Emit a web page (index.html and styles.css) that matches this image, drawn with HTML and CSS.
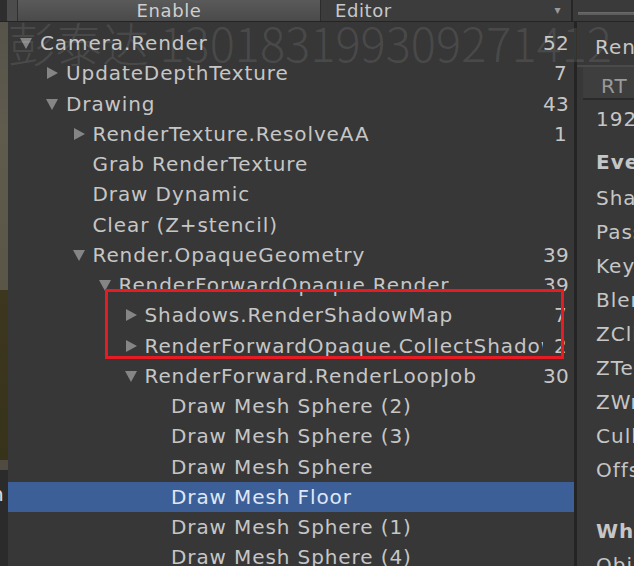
FILE: index.html
```html
<!DOCTYPE html>
<html>
<head>
<meta charset="utf-8">
<link rel="stylesheet" href="styles.css">
</head>
<body>
<div class="app">
  <div class="toolbar">
    <div class="tb-corner"></div>
    <div class="tb-stub"></div>
    <div class="tb-enable">Enable</div>
    <div class="tb-editor"><span>Editor</span><span class="caret">▾</span></div>
    <div class="tb-right"><div class="tb-slider"></div></div>
  </div>
  <div class="main">
    <div class="scene-strip">
      <div class="seg seg-tan"></div>
      <div class="seg seg-olive"></div>
      <div class="seg seg-light"></div>
      <div class="seg seg-dark"><span class="peek">n</span></div>
    </div>
    <div class="tree">
      <div class="row l0"><span class="arrow down"></span><span class="label">Camera.Render</span><span class="count">52</span></div>
      <div class="row l1"><span class="arrow right"></span><span class="label">UpdateDepthTexture</span><span class="count">7</span></div>
      <div class="row l1"><span class="arrow down"></span><span class="label">Drawing</span><span class="count">43</span></div>
      <div class="row l2"><span class="arrow right"></span><span class="label">RenderTexture.ResolveAA</span><span class="count">1</span></div>
      <div class="row l2"><span class="arrow"></span><span class="label">Grab RenderTexture</span><span class="count"></span></div>
      <div class="row l2"><span class="arrow"></span><span class="label">Draw Dynamic</span><span class="count"></span></div>
      <div class="row l2"><span class="arrow"></span><span class="label">Clear (Z+stencil)</span><span class="count"></span></div>
      <div class="row l2"><span class="arrow down"></span><span class="label">Render.OpaqueGeometry</span><span class="count">39</span></div>
      <div class="row l3"><span class="arrow down"></span><span class="label">RenderForwardOpaque.Render</span><span class="count">39</span></div>
      <div class="row l4"><span class="arrow right"></span><span class="label">Shadows.RenderShadowMap</span><span class="count">7</span></div>
      <div class="row l4"><span class="arrow right"></span><span class="label">RenderForwardOpaque.CollectShadows</span><span class="count">2</span></div>
      <div class="row l4"><span class="arrow down"></span><span class="label">RenderForward.RenderLoopJob</span><span class="count">30</span></div>
      <div class="row l5"><span class="arrow"></span><span class="label">Draw Mesh Sphere (2)</span><span class="count"></span></div>
      <div class="row l5"><span class="arrow"></span><span class="label">Draw Mesh Sphere (3)</span><span class="count"></span></div>
      <div class="row l5"><span class="arrow"></span><span class="label">Draw Mesh Sphere</span><span class="count"></span></div>
      <div class="row l5 selected"><span class="arrow"></span><span class="label">Draw Mesh Floor</span><span class="count"></span></div>
      <div class="row l5"><span class="arrow"></span><span class="label">Draw Mesh Sphere (1)</span><span class="count"></span></div>
      <div class="row l5"><span class="arrow"></span><span class="label">Draw Mesh Sphere (4)</span><span class="count"></span></div>
      <div class="highlight-box"></div>
    </div>
    <div class="divider"></div>
    <div class="inspector">
      <div class="insp-title">Render Target: _ScreenSpaceShadowmapTexture</div>
      <div class="insp-tabs"><span class="tab">RT 0</span></div>
      <div class="insp-line size">1920x1080 ARGB32</div>
      <div class="insp-line bold event">Event #22: Draw Mesh</div>
      <div class="insp-line">Shader</div>
      <div class="insp-line">Pass</div>
      <div class="insp-line">Keywords</div>
      <div class="insp-line">Blend</div>
      <div class="insp-line">ZClip</div>
      <div class="insp-line">ZTest</div>
      <div class="insp-line">ZWrite</div>
      <div class="insp-line">Cull</div>
      <div class="insp-line">Offset</div>
      <div class="insp-line bold why">Why this draw call can't be batched</div>
      <div class="insp-line">Objects have different materials</div>
    </div>
  </div>
  <div class="watermark">彭泰达 130183199309271412</div>
</div>
</body>
</html>
```

FILE: styles.css
```css
* { box-sizing: border-box; }
html, body { margin: 0; padding: 0; }
body {
  width: 634px;
  height: 566px;
  overflow: hidden;
  background: #383838;
  font-family: "DejaVu Sans", "Noto Sans CJK SC", sans-serif;
  color: #c6c6c6;
}
.app {
  position: relative;
  width: 634px;
  height: 566px;
  display: flex;
  flex-direction: column;
}
.toolbar {
  height: 22px;
  flex: none;
  display: flex;
  background: #2a2a2a;
  border-bottom: 1px solid #242424;
}
.tb-corner { width: 7px; background: #2e2e2e; }
.tb-stub { width: 11px; background: #4c4c4c; border-right: 1px solid #303030; }
.tb-enable {
  width: 303px;
  background: linear-gradient(#5a5a5a, #4a4a4a);
  border-right: 1px solid #2c2c2c;
  text-align: center;
  font-size: 18px;
  line-height: 21px;
  color: #cfcfcf;
  letter-spacing: 0.6px;
}
.tb-editor {
  width: 252px;
  background: #3c3c3c;
  border-right: 2px solid #262626;
  display: flex;
  justify-content: space-between;
  padding: 0 10px 0 14px;
  font-size: 18px;
  line-height: 21px;
  color: #c8c8c8;
  letter-spacing: 0.6px;
}
.caret { font-size: 12px; color: #9a9a9a; }
.tb-right { flex: 1; background: #3a3a3a; padding: 12px 0 0 5px; }
.tb-slider { height: 3px; background: #5e5e5e; border-top: 1px solid #6a6a6a; }

.main { flex: 1; display: flex; min-height: 0; }
.scene-strip { width: 8px; flex: none; display: flex; flex-direction: column; }
.seg-tan { height: 268px; background: linear-gradient(#56534a, #5f5b4d 40%, #5a5647); }
.seg-olive { height: 170px; background: linear-gradient(#3d371f, #37321a); }
.seg-light { height: 10px; background: #4f4b40; }
.seg-dark { flex: 1; background: #2b2b2b; position: relative; overflow: hidden; }
.peek {
  display: block;
  margin-top: 12px;
  margin-left: -9px;
  font-size: 20px;
  color: #e0e0e0;
}

.tree {
  width: 566px;
  flex: none;
  position: relative;
  padding-top: 6px;
  background: #373737;
}
.row {
  height: 30.25px;
  display: flex;
  align-items: center;
  padding-right: 7px;
  font-size: 20px;
  letter-spacing: 0.9px;
  white-space: nowrap;
}
.l0 { padding-left: 12px; }
.l1 { padding-left: 38px; }
.l2 { padding-left: 64.5px; }
.l3 { padding-left: 90.5px; }
.l4 { padding-left: 116.5px; }
.l5 { padding-left: 143px; }
.arrow { width: 20px; flex: none; height: 14px; position: relative; }
.arrow.right::before {
  content: "";
  position: absolute;
  left: 1px; top: 1px;
  border-left: 11px solid #858585;
  border-top: 6px solid transparent;
  border-bottom: 6px solid transparent;
}
.arrow.down::before {
  content: "";
  position: absolute;
  left: 0; top: 2px;
  border-top: 11px solid #858585;
  border-left: 6px solid transparent;
  border-right: 6px solid transparent;
}
.label { flex: 1; overflow: hidden; min-width: 0; }
.count { width: 24px; flex: none; text-align: right; letter-spacing: 0.3px; }
.row.selected { background: #3d5f97; color: #dfe8f7; }

.highlight-box {
  position: absolute;
  left: 97px;
  top: 267px;
  width: 459px;
  height: 70px;
  border: 3px solid #e61c25;
}

.divider { width: 3px; flex: none; background: #242424; }
.inspector {
  flex: 1;
  min-width: 0;
  overflow: hidden;
  background: #383838;
  font-size: 20px;
  letter-spacing: 1px;
  white-space: nowrap;
}
.insp-title { height: 45px; line-height: 50px; padding-left: 18px; border-bottom: 2px solid #4a4a4a; }
.insp-tabs { height: 33px; margin-left: 6px; background: #3e3e3e; border-bottom: 2px solid #2a2a2a; line-height: 38px; padding-left: 18px; color: #9a9a9a; }
.insp-line { height: 34px; line-height: 34px; padding-left: 19px; }
.insp-line.size { height: 38px; line-height: 38px; }
.insp-line.event { height: 38px; line-height: 38px; margin-top: 5px; }
.insp-line.why { margin-top: 27px; }
.insp-line.bold { font-weight: bold; }

.watermark {
  position: absolute;
  left: 8px;
  top: 14px;
  font-family: "Noto Sans CJK SC", sans-serif;
  font-weight: 300;
  font-size: 47px;
  line-height: 56px;
  color: rgba(255, 255, 255, 0.1);
  white-space: nowrap;
  pointer-events: none;
}
```
